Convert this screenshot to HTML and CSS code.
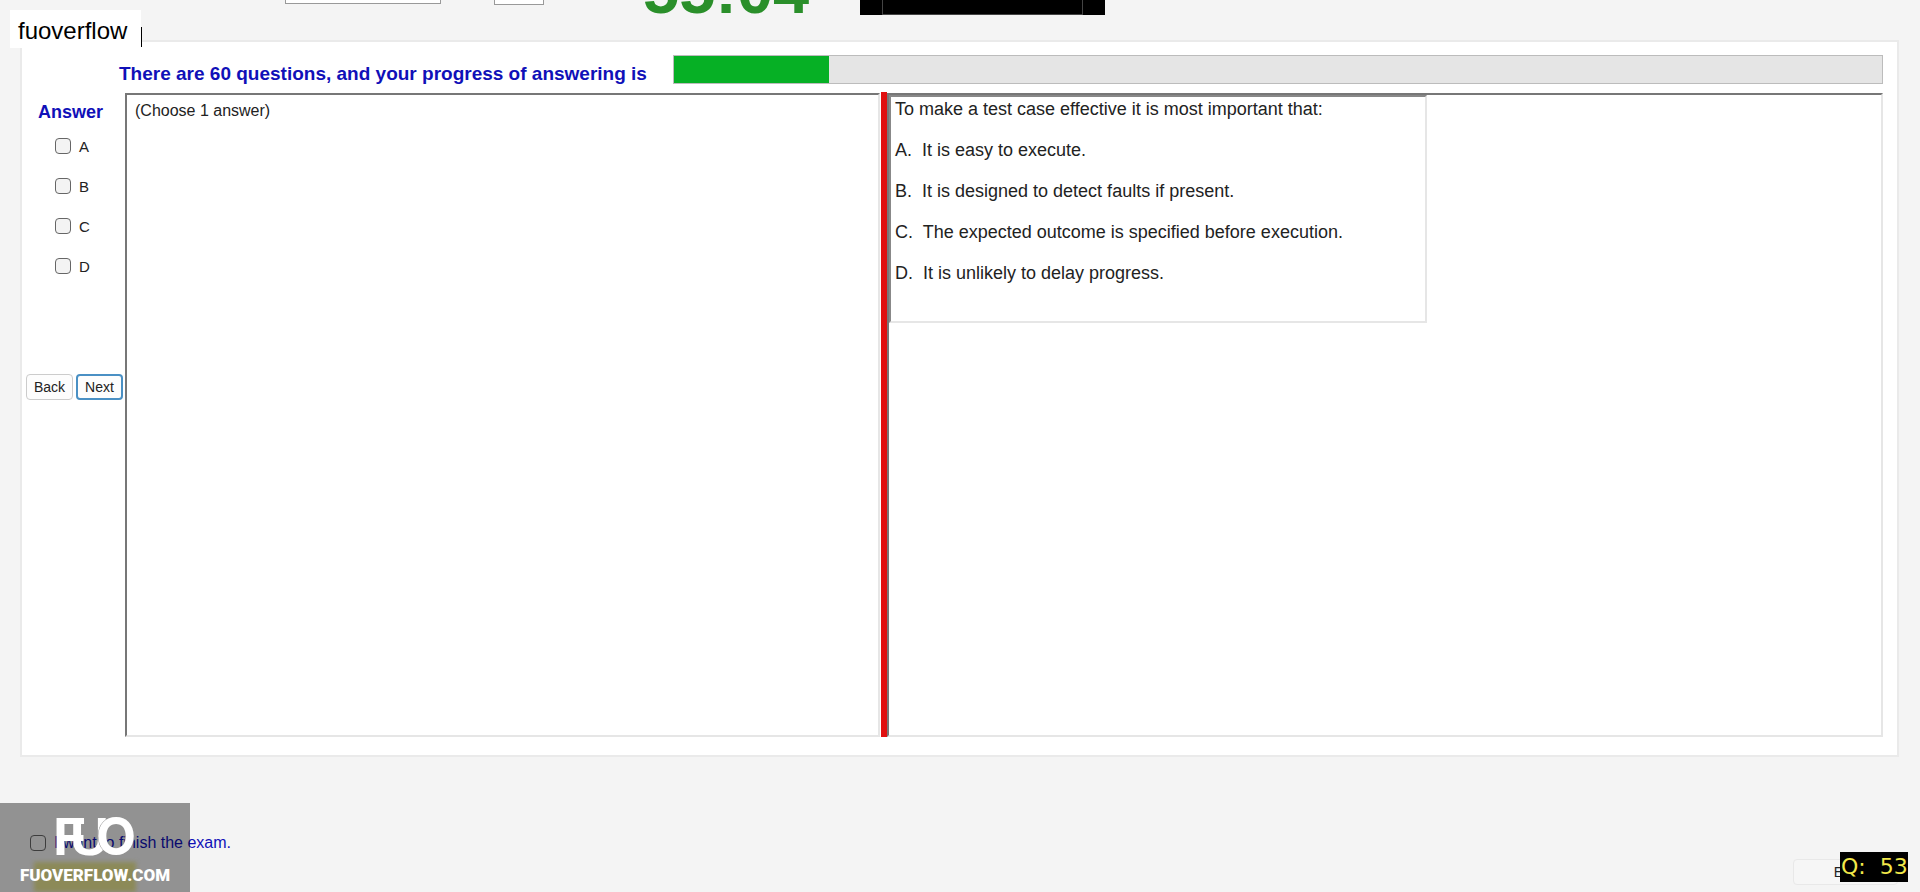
FILE: index.html
```html
<!DOCTYPE html>
<html lang="en">
<head>
    <meta charset="UTF-8">
    <meta name="viewport" content="width=device-width, initial-scale=1.0">
    <title>Exam</title>
    <link rel="stylesheet" href="styles.css">
</head>
<body>

<header class="top-bar">
    <select class="font-select" aria-label="Font"><option></option></select>
    <select class="size-select" aria-label="Size"><option></option></select>
    <div class="timer">55:04</div>
    <div class="camera"><div class="camera-frame"></div></div>
</header>

<main class="panel">
    <div class="progress-row">
        <h2 id="progressLabel">There are 60 questions, and your progress of answering is</h2>
        <div class="progress" role="progressbar" aria-labelledby="progressLabel"><div class="progress-fill"></div></div>
    </div>

    <div class="exam">
        <div class="answers">
            <h2>Answer</h2>
            <label><input type="checkbox"> A</label>
            <label><input type="checkbox"> B</label>
            <label><input type="checkbox"> C</label>
            <label><input type="checkbox"> D</label>
            <div class="nav-buttons">
                <button>Back</button>
                <button class="next">Next</button>
            </div>
        </div>
        <div class="hint-pane">(Choose 1 answer)</div>
        <div class="splitter"></div>
        <div class="question-pane">
            <div class="question">
                <p>To make a test case effective it is most important that:</p>
                <p>A.&nbsp; It is easy to execute.</p>
                <p>B.&nbsp; It is designed to detect faults if present.</p>
                <p>C.&nbsp; The expected outcome is specified before execution.</p>
                <p>D.&nbsp; It is unlikely to delay progress.</p>
            </div>
        </div>
    </div>
</main>

<footer class="bottom-bar">
    <label class="finish"><input type="checkbox"> I want to finish the exam.</label>
    <button class="exit">Exit</button>
</footer>

<div class="tag">fuoverflow</div>

<div class="watermark">
    <div class="highlight"></div>
    <svg width="88" height="42" viewBox="0 0 88 42" role="img" aria-label="FUO">
        <text x="-1" y="39">F</text>
        <text x="16" y="39">U</text>
        <text class="round" x="42" y="39">O</text>
    </svg>
    <div class="site">FUOVERFLOW.COM</div>
</div>

<div class="counter">Q:&nbsp; 53</div>

</body>
</html>
```
FILE: styles.css
```css
* {
    box-sizing: border-box;
}

body {
    margin: 0;
    min-height: 100vh;
    position: relative;
    overflow: hidden;
    background-color: #f4f4f4;
    color: #222;
    font-family: "Liberation Sans", Arial, sans-serif;
    font-size: 16px;
}

h2 {
    margin: 0;
    font-size: 18px;
    line-height: 20px;
    color: #1010b8;
}

input[type="checkbox"] {
    appearance: none;
    width: 16px;
    height: 16px;
    margin: 0;
    border: 1px solid #666;
    border-radius: 4px;
    background-color: #f3f3f3;
}

button {
    height: 26px;
    padding: 0;
    border: 1px solid #ccc;
    border-radius: 4px;
    background-color: #fdfdfd;
    color: #222;
    font-family: inherit;
    font-size: 14px;
}

/* top bar, scrolled mostly out of view */
.top-bar {
    display: flex;
    align-items: flex-end;
    height: 15px;
    margin-bottom: 25px;
    padding-left: 285px;
    overflow: hidden;
}

.top-bar select {
    height: 24px;
    border: 1px solid #999;
    border-radius: 0;
    background-color: #fff;
}

.font-select {
    width: 156px;
    margin-bottom: 11px;
}

.size-select {
    width: 50px;
    margin: 0 0 10px 53px;
}

.timer {
    width: 170px;
    margin-left: 99px;
    font-size: 65px;
    font-weight: bold;
    line-height: 48px;
    color: #2a8f2a;
}

.camera {
    width: 245px;
    height: 60px;
    margin-left: 47px;
    padding: 0 22px;
    background-color: #000;
}

.camera-frame {
    height: 60px;
    border: 1px solid #444;
}

.panel {
    margin: 0 21px 0 20px;
    padding: 13px 14px 18px 4px;
    border: 2px solid #eaeaea;
    background-color: #fff;
}

.progress-row {
    display: flex;
    padding-left: 93px;
}

.progress-row h2 {
    width: 554px;
    padding-top: 9px;
    font-size: 19px;
    white-space: nowrap;
}

.progress {
    flex: 1;
    height: 29px;
    border: 1px solid #bcbcbc;
    background-color: #e5e5e5;
}

.progress-fill {
    width: 155px;
    height: 100%;
    background-color: #06b025;
}

.exam {
    display: flex;
    height: 645px;
    margin-top: 8px;
}

.answers {
    display: flex;
    flex-direction: column;
    width: 99px;
}

.answers h2 {
    padding: 10px 0 0 12px;
    margin-bottom: 4px;
}

.answers label {
    display: flex;
    align-items: center;
    gap: 8px;
    height: 40px;
    padding-left: 29px;
    font-size: 15px;
}

.nav-buttons {
    display: flex;
    gap: 3px;
    margin-top: 88px;
}

.nav-buttons button {
    width: 47px;
}

.nav-buttons .next {
    border: 2px solid #4a90c4;
}

.hint-pane {
    width: 755px;
    margin-top: 1px;
    padding: 7px 8px;
    border: 2px solid #e6e6e6;
    border-top-color: #777;
    border-left-color: #777;
}

.splitter {
    width: 6px;
    margin-left: 1px;
    background-color: #e01010;
}

.question-pane {
    flex: 1;
    margin-top: 1px;
    border: 2px solid #e6e6e6;
    border-top-color: #777;
    border-left-color: #777;
}

.question {
    width: 538px;
    height: 228px;
    padding: 2px 4px;
    border: 2px solid #e6e6e6;
    border-top-color: #888;
    border-left-color: #888;
    font-size: 18px;
    line-height: 21px;
}

.question p {
    margin: 0 0 20px;
}

.bottom-bar {
    display: flex;
    justify-content: space-between;
    padding: 75px 22px 0 30px;
}

.finish {
    display: flex;
    align-items: center;
    gap: 8px;
    height: 22px;
    color: #1010b8;
}

.exit {
    width: 105px;
    margin-top: 27px;
    border-color: #e8e8e8;
    background-color: #f6f6f6;
}

.tag {
    position: absolute;
    top: 10px;
    left: 10px;
    width: 131px;
    padding: 10px 8px 6px;
    background-color: #fff;
    color: #000;
    font-size: 24px;
    line-height: 22px;
}

.tag::after {
    content: "";
    position: absolute;
    top: 17px;
    right: -1px;
    width: 1px;
    height: 20px;
    background-color: #000;
}

.watermark {
    position: absolute;
    left: 0;
    bottom: 0;
    width: 190px;
    height: 89px;
    background-color: rgba(0, 0, 0, 0.4);
    color: #fff;
}

.watermark svg {
    display: block;
    position: relative;
    margin: 13px 0 0 54px;
}

.watermark text {
    font-size: 54px;
    font-weight: bold;
    fill: #fff;
}

.watermark .round {
    font-family: Inter, sans-serif;
    font-size: 52px;
    stroke: #929292;
    stroke-width: 1px;
    paint-order: stroke;
}

.highlight {
    position: absolute;
    left: 34px;
    bottom: 0;
    width: 102px;
    height: 30px;
    background-color: #8c8a58;
    filter: blur(2px);
}

.site {
    position: relative;
    margin-top: 5px;
    text-align: center;
    font-family: Roboto, sans-serif;
    font-size: 17px;
    font-weight: 900;
    line-height: 24px;
}

.counter {
    position: absolute;
    right: 12px;
    bottom: 10px;
    width: 68px;
    padding-left: 1px;
    background-color: #000;
    color: #f2e84a;
    font-family: "DejaVu Sans", sans-serif;
    font-size: 22px;
    line-height: 30px;
    white-space: nowrap;
}
```
